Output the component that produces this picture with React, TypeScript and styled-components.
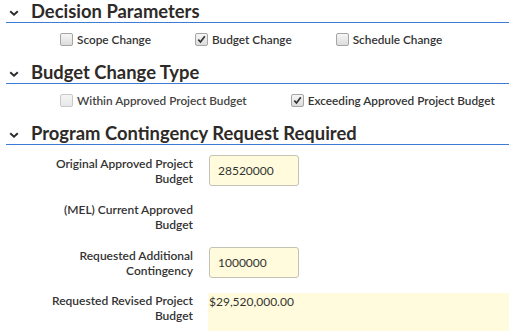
import React from "react";
import styled, { createGlobalStyle } from "styled-components";

const Global = createGlobalStyle`
  html, body { margin: 0; padding: 0; background: #fff; }
  body { font-family: Lato, "Open Sans", sans-serif; color: #333; }
`;

const Page = styled.div`
  width: 509px;
  height: 331px;
  overflow: hidden;
`;

const Section = styled.section``;

const Header = styled.div`
  display: flex;
  align-items: center;
  height: 22px;
  margin-left: 6px;
  border-bottom: 1px solid #3c7bd6;
  gap: 12px;
  padding-left: 3px;
`;

const Title = styled.h2`
  margin: 0;
  font-size: 18.4px;
  font-weight: 700;
  line-height: 22px;
  color: #2e2a28;
`;

const Chevron = () => (
  <svg width="10" height="8" viewBox="0 0 10 8" style={{ marginTop: 3 }}>
    <path d="M1.2 2.2 L5 5.8 L8.8 2.2" fill="none" stroke="#2b2b2b" strokeWidth="1.9" />
  </svg>
);

const CheckRow = styled.div`
  display: flex;
  align-items: flex-start;
  gap: 44px;
  height: 38px;
  box-sizing: border-box;
  padding: 10px 0 0 60px;
`;

const CheckItem = styled.label<{ $disabled?: boolean }>`
  display: flex;
  align-items: center;
  gap: 4px;
  font-size: 11.8px;
  font-weight: 600;
  line-height: 14px;
  color: ${(p) => (p.$disabled ? "#444" : "#333")};
`;

const Box = styled.span<{ $disabled?: boolean }>`
  width: 11px;
  height: 11px;
  border: 1px solid ${(p) => (p.$disabled ? "#c8c8c8" : "#a5a5a5")};
  border-radius: 2px;
  background: ${(p) =>
    p.$disabled ? "linear-gradient(#f4f4f4, #e8e8e8)" : "linear-gradient(#f6f6f6, #dcdcdc)"};
  display: flex;
  align-items: center;
  justify-content: center;
  margin-top: -2px;
`;

const Check = ({ checked, disabled }: { checked?: boolean; disabled?: boolean }) => (
  <Box $disabled={disabled}>
    {checked && (
      <svg width="9" height="9" viewBox="0 0 9 9">
        <path d="M1.3 4.6 L3.5 7 L7.8 1.2" fill="none" stroke="#333" strokeWidth="1.7" />
      </svg>
    )}
  </Box>
);

const Form = styled.div`
  display: flex;
  flex-direction: column;
  gap: 15px;
  padding-top: 10px;
`;

const Row = styled.div<{ $top?: boolean }>`
  display: grid;
  grid-template-columns: 193px 1fr;
  column-gap: 16px;
  align-items: ${(p) => (p.$top ? "start" : "center")};
  min-height: 31px;
`;

const Label = styled.div`
  text-align: right;
  font-size: 12px;
  font-weight: 600;
  line-height: 15px;
  color: #333;
  padding-left: 40px;
`;

const Input = styled.div`
  width: 90px;
  height: 31px;
  box-sizing: border-box;
  border: 1px solid #c4c2b4;
  border-radius: 3px;
  background: #fffbdc;
  font-size: 12px;
  display: flex;
  align-items: center;
  padding-left: 8px;
  color: #333;
`;

const Readonly = styled.div`
  background: #fffbdc;
  height: 50px;
  margin-left: -1px;
  padding: 2px 1px;
  font-size: 12px;
  line-height: 14px;
  color: #333;
`;

export default function App() {
  return (
    <Page>
      <Global />
      <Section>
        <Header>
          <Chevron />
          <Title>Decision Parameters</Title>
        </Header>
        <CheckRow>
          <CheckItem>
            <Check />
            Scope Change
          </CheckItem>
          <CheckItem>
            <Check checked />
            Budget Change
          </CheckItem>
          <CheckItem>
            <Check />
            Schedule Change
          </CheckItem>
        </CheckRow>
      </Section>
      <Section>
        <Header>
          <Chevron />
          <Title>Budget Change Type</Title>
        </Header>
        <CheckRow>
          <CheckItem $disabled>
            <Check disabled />
            Within Approved Project Budget
          </CheckItem>
          <CheckItem>
            <Check checked />
            Exceeding Approved Project Budget
          </CheckItem>
        </CheckRow>
      </Section>
      <Section>
        <Header>
          <Chevron />
          <Title>Program Contingency Request Required</Title>
        </Header>
        <Form>
          <Row>
            <Label>Original Approved Project Budget</Label>
            <Input>28520000</Input>
          </Row>
          <Row>
            <Label>(MEL) Current Approved Budget</Label>
            <div />
          </Row>
          <Row>
            <Label>Requested Additional Contingency</Label>
            <Input>1000000</Input>
          </Row>
          <Row $top>
            <Label>Requested Revised Project Budget</Label>
            <Readonly>$29,520,000.00</Readonly>
          </Row>
        </Form>
      </Section>
    </Page>
  );
}
